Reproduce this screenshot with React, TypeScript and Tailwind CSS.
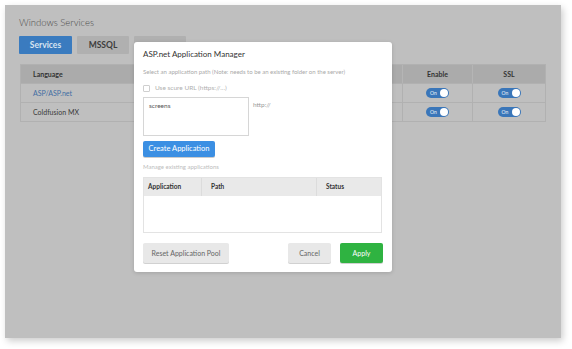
import React from 'react';

const Toggle: React.FC = () => (
  <div className="flex h-[10px] w-[23px] items-center justify-between rounded-full bg-[#3a76b9] pl-[4px] pr-[1px]">
    <span className="text-[5px] leading-none text-white/90">On</span>
    <span className="h-[8px] w-[8px] rounded-full bg-white" />
  </div>
);

const ServiceRow: React.FC<{ name: string; link?: boolean }> = ({ name, link }) => (
  <div className="flex h-[19px] items-center border-t border-[#b1b1b1]">
    <div className={`flex-1 pl-[12px] text-[7px] ${link ? 'text-[#3f6ea3]' : 'text-[#3a3a3a]'}`}>{name}</div>
    <div className="flex h-full w-[70px] items-center justify-center border-l border-[#b1b1b1]">
      <Toggle />
    </div>
    <div className="flex h-full w-[73px] items-center justify-center border-l border-[#b1b1b1]">
      <Toggle />
    </div>
  </div>
);

const AppManagerModal: React.FC = () => (
  <div className="absolute left-[129px] top-[37px] flex h-[230px] w-[258px] flex-col rounded-[3px] bg-white px-[9px] shadow-[0_1px_4px_rgba(0,0,0,0.15)]">
    <div className="pt-[6px] text-[8px] leading-[12px] text-[#333]">ASP.net Application Manager</div>

    <div className="mt-[8px] text-[6px] leading-[8px] text-[#a9a9a9]">
      Select an application path (Note: needs to be an existing folder on the server)
    </div>

    <div className="mt-[8px] flex h-[8px] items-center gap-[5px]">
      <span className="h-[7px] w-[7px] rounded-[1px] border border-[#cfcfcf] bg-white" />
      <span className="text-[6.5px] leading-[8px] text-[#b0b0b0]">Use scure URL (https://...)</span>
    </div>

    <div className="mt-[5px] flex items-start gap-[4px]">
      <div className="h-[39px] w-[106px] border border-[#d6d6d6] px-[5px] pt-[3px] text-[6.5px] leading-[9px] text-[#555]">
        screens
      </div>
      <span className="pt-[3px] text-[6.5px] leading-[9px] text-[#999]">http://</span>
    </div>

    <button className="mt-[5px] block h-[16px] w-[72px] rounded-[2px] bg-[#3b8fe3] text-[7.5px] text-white shadow-[0_1px_0_rgba(0,0,0,0.2)]">
      Create Application
    </button>

    <div className="mt-[6px] text-[6px] leading-[8px] text-[#bdbdbd]">Manage existing applications</div>

    <div className="mt-[6px] h-[56px] w-[239px] border border-[#e3e3e3]">
      <div className="flex h-[18px] items-center bg-[#e9e9e9] text-[6.5px] font-bold text-[#333]">
        <div className="flex h-full w-[57px] items-center pl-[4px]">Application</div>
        <div className="flex h-full w-[115px] items-center border-l border-[#dcdcdc] pl-[9px]">Path</div>
        <div className="flex h-full flex-1 items-center border-l border-[#dcdcdc] pl-[9px]">Status</div>
      </div>
    </div>

    <div className="mt-[10px] flex items-center">
      <button className="h-[20px] w-[86px] rounded-[2px] bg-[#e8e8e8] text-[7px] text-[#666] shadow-[0_1px_0_rgba(0,0,0,0.18)]">
        Reset Application Pool
      </button>
      <div className="flex-1" />
      <button className="h-[20px] w-[43px] rounded-[2px] bg-[#e8e8e8] text-[7px] text-[#666] shadow-[0_1px_0_rgba(0,0,0,0.18)]">
        Cancel
      </button>
      <button className="ml-[9px] h-[20px] w-[43px] rounded-[2px] bg-[#2fb341] text-[7px] text-white shadow-[0_1px_0_rgba(0,0,0,0.18)]">
        Apply
      </button>
    </div>
  </div>
);

const App: React.FC = () => {
  return (
    <div className="h-[349px] w-[572px] bg-white p-[5px] font-['Lato',sans-serif]">
      <div className="relative h-[333px] w-[556px] bg-[#bfbfbf] px-[14px] shadow-[2px_3px_7px_rgba(0,0,0,0.2)]">
        <div className="pt-[12px] text-[9.5px] font-light leading-[12px] text-[#4d4d4d]">Windows Services</div>

        <div className="mt-[7px] flex gap-[5px]">
          <div className="flex h-[18px] w-[53px] items-center justify-center rounded-[1px] bg-[#3a7bbf] text-[8.5px] font-bold text-[#d8e4f0]">
            Services
          </div>
          <div className="flex h-[18px] w-[52px] items-center justify-center rounded-[1px] bg-[#b0b0b0] text-[8.5px] font-bold text-[#3d3d3d]">
            MSSQL
          </div>
          <div className="h-[18px] w-[52px] rounded-[1px] bg-[#b0b0b0]" />
        </div>

        <div className="ml-[1px] mt-[10px] w-[526px] border border-[#b1b1b1]">
          <div className="flex h-[18px] items-center bg-[#ababab] text-[7px] font-bold text-[#333]">
            <div className="flex-1 pl-[12px]">Language</div>
            <div className="flex h-full w-[70px] items-center justify-center border-l border-[#b5b5b5]">Enable</div>
            <div className="flex h-full w-[73px] items-center justify-center border-l border-[#b5b5b5]">SSL</div>
          </div>
          <ServiceRow name="ASP/ASP.net" link />
          <ServiceRow name="Coldfusion MX" />
        </div>

        <AppManagerModal />
      </div>
    </div>
  );
};

export default App;
